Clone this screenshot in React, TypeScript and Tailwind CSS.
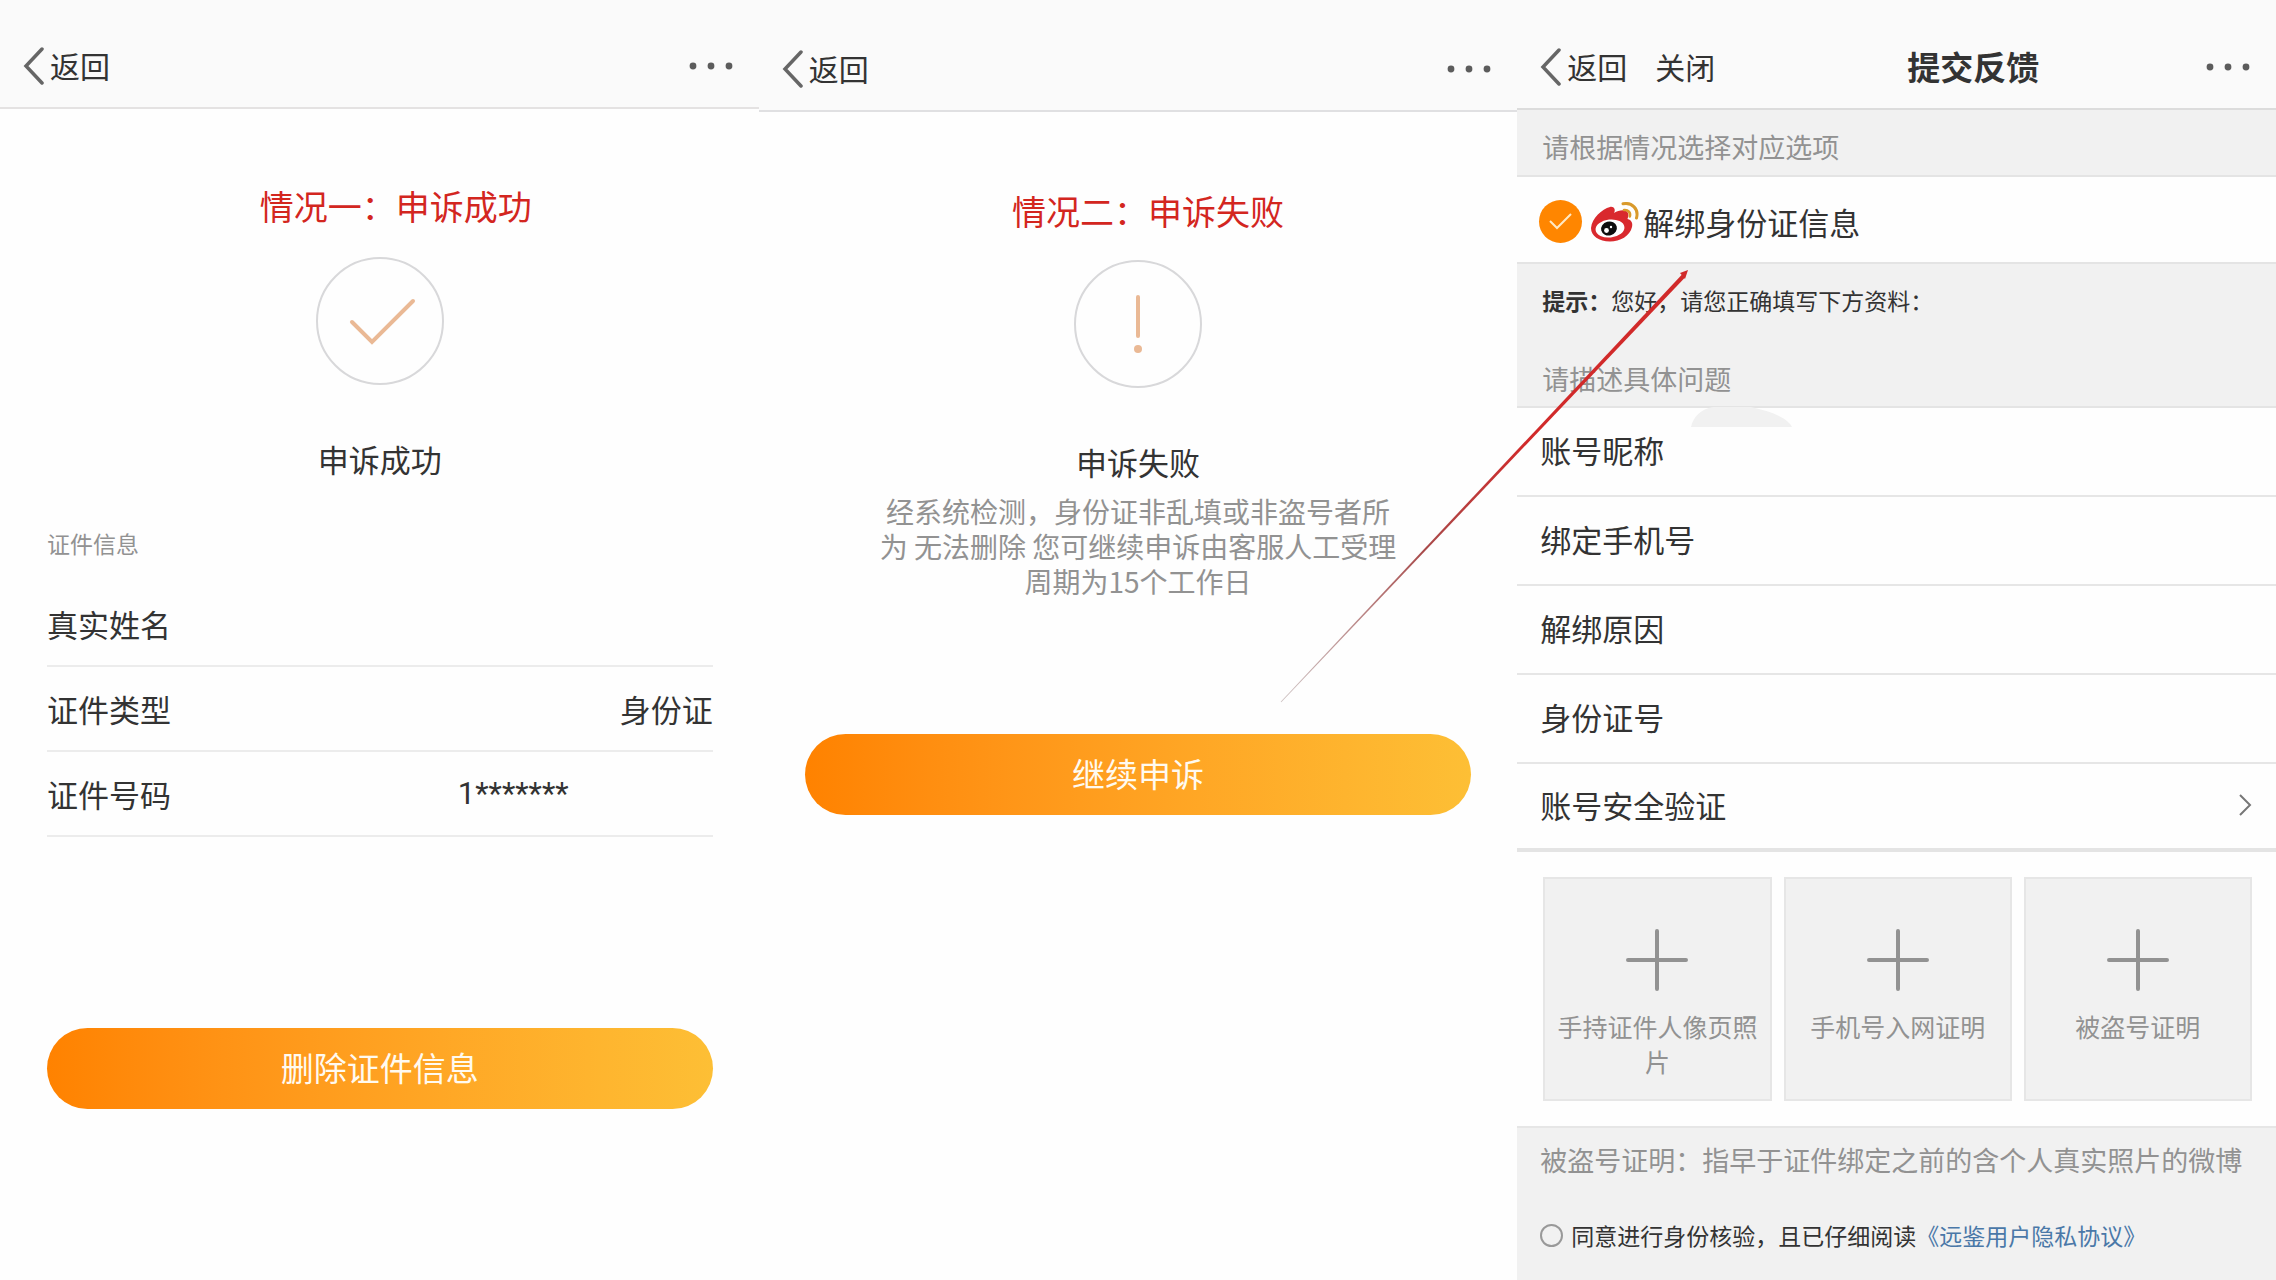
import type { ReactNode } from "react";

const idRows = [
  { label: "真实姓名", value: "", masked: false },
  { label: "证件类型", value: "身份证", masked: false },
  { label: "证件号码", value: "1*******", masked: true },
];

const fields = [
  { id: "nickname", label: "账号昵称" },
  { id: "phone", label: "绑定手机号" },
  { id: "reason", label: "解绑原因" },
  { id: "idNumber", label: "身份证号" },
];

const uploads = ["手持证件人像页照片", "手机号入网证明", "被盗号证明"];

const failureReason = `经系统检测，身份证非乱填或非盗号者所
为 无法删除 您可继续申诉由客服人工受理
周期为15个工作日`;

function BackButton() {
  return (
    <button className="flex items-center gap-1.5 text-[30px]">
      <svg width="21" height="38" viewBox="0 0 21 38" fill="none" aria-hidden="true">
        <path d="M19 2 L3 19 L19 36" stroke="#666" strokeWidth="3.5" strokeLinecap="round" />
      </svg>
      <span className="pb-0.5">返回</span>
    </button>
  );
}

function MoreButton() {
  return (
    <button className="ml-auto" aria-label="更多">
      <svg width="44" height="8" viewBox="0 0 44 8" fill="#5c5c5c" aria-hidden="true">
        <circle cx="4" cy="4" r="3.4" />
        <circle cx="22" cy="4" r="3.4" />
        <circle cx="40" cy="4" r="3.4" />
      </svg>
    </button>
  );
}

function StatusIcon({ children }: { children: ReactNode }) {
  return (
    <svg
      className="mx-auto"
      width="128"
      height="128"
      viewBox="0 0 128 128"
      fill="none"
      aria-hidden="true"
    >
      <circle cx="64" cy="64" r="63" stroke="#d8d8da" strokeWidth="2" />
      {children}
    </svg>
  );
}

function PrimaryButton({ children }: { children: ReactNode }) {
  return (
    <button className="h-[81px] w-full rounded-full bg-linear-to-r from-[#ff8200] to-[#fdbf35] pb-1 text-[33px] text-[#fffaf0]">
      {children}
    </button>
  );
}

function WeiboLogo() {
  return (
    <svg width="48" height="40" viewBox="0 0 48 40" fill="none" aria-hidden="true">
      <path
        d="M0 26 C1 16 11 7 19 5 C23 4 25 8 23 11 C28 8 35 7 37 11 C38 13 37 15 36.500 17 C40.500 18 42 21 41 25 C39 34 29 39.500 19 39.500 C8 39.500 0 34 0 26Z"
        fill="#d9292e"
      />
      <ellipse cx="19" cy="26.500" rx="14.500" ry="9" transform="rotate(-6 19 26.500)" fill="#fff" />
      <ellipse cx="18" cy="26.500" rx="8" ry="7" transform="rotate(-15 18 26.500)" fill="#0d0d0d" />
      <circle cx="15.500" cy="28.500" r="2.400" fill="#fff" />
      <circle cx="20" cy="25" r="1.200" fill="#fff" />
      <path
        d="M32 1.800 C41 0 48 7 45.500 16"
        stroke="#d99a2b"
        strokeWidth="3"
        strokeLinecap="round"
      />
      <path
        d="M33 8 C37 7.500 40 10.500 38.800 14.500"
        stroke="#d99a2b"
        strokeWidth="2.600"
        strokeLinecap="round"
      />
    </svg>
  );
}

function SuccessPanel() {
  return (
    <section>
      <header className="flex h-[109px] items-center border-b-2 border-[#e4e2e2] bg-[#fafafa] pt-6 pr-[26px] pl-[23px]">
        <BackButton />
        <MoreButton />
      </header>
      <div className="pr-[46px] pl-[47px]">
        <h2 className="mt-[73px] pl-8 text-center text-[34px] leading-12 text-[#d3261f]">
          情况一：申诉成功
        </h2>
        <div className="mt-[27px]">
          <StatusIcon>
            <path d="M36 65 L56 85 L97 44" stroke="#eab995" strokeWidth="4" strokeLinecap="round" />
          </StatusIcon>
        </div>
        <p className="mt-[50px] text-center leading-12">申诉成功</p>
        <h3 className="mt-[42px] text-[23px] leading-9 text-[#929292]">证件信息</h3>
        <dl className="mt-[21px]">
          {idRows.map((row) => (
            <div
              key={row.label}
              className="flex h-[85px] items-center justify-between border-b-2 border-[#ececec]"
            >
              <dt>{row.label}</dt>
              <dd className={row.masked ? "pr-36 font-[Roboto,sans-serif]" : ""}>{row.value}</dd>
            </div>
          ))}
        </dl>
        <div className="mt-[191px]">
          <PrimaryButton>删除证件信息</PrimaryButton>
        </div>
      </div>
    </section>
  );
}

function FailurePanel() {
  return (
    <section>
      <header className="flex h-28 items-center border-b-2 border-[#e0e0e2] bg-[#fafafa] pt-7 pr-[26px] pl-[23px]">
        <BackButton />
        <MoreButton />
      </header>
      <div className="px-[46px]">
        <h2 className="mt-[75px] pl-5 text-center text-[34px] leading-12 text-[#d3261f]">
          情况二：申诉失败
        </h2>
        <div className="mt-[25px]">
          <StatusIcon>
            <path d="M64 37 V76" stroke="#eab995" strokeWidth="4" strokeLinecap="round" />
            <circle cx="64" cy="89" r="4" fill="#eab995" />
          </StatusIcon>
        </div>
        <p className="mt-[50px] text-center leading-12">申诉失败</p>
        <p className="mt-2 text-center text-[28px] leading-[35px] whitespace-pre-line text-[#929292]">
          {failureReason}
        </p>
        <div className="mt-[135px]">
          <PrimaryButton>继续申诉</PrimaryButton>
        </div>
      </div>
    </section>
  );
}

// Annotation that runs from the failure panel up to the selected option
function Arrow() {
  return (
    <svg
      className="pointer-events-none absolute top-[269px] -left-[237px]"
      width="410"
      height="434"
      viewBox="0 0 410 434"
      aria-hidden="true"
    >
      <defs>
        <linearGradient id="arrowFade" x1="0" y1="434" x2="410" y2="0" gradientUnits="userSpaceOnUse">
          <stop offset="0" stopColor="#b8a8a8" stopOpacity="0.7" />
          <stop offset="0.35" stopColor="#a84a4a" />
          <stop offset="0.6" stopColor="#d12a2a" />
          <stop offset="1" stopColor="#d12a2a" />
        </linearGradient>
      </defs>
      <path d="M0.700 432.700 L402 5.500 L405 8.500 L1.300 433.300 Z" fill="url(#arrowFade)" />
      <path d="M408 1 L400 4 L405 10 Z" fill="#d12a2a" />
    </svg>
  );
}

function FeedbackPanel() {
  return (
    <section className="relative flex flex-col">
      <header className="flex h-[110px] items-center border-b-2 border-[#dcdcdc] bg-[#fafafa] pt-[26px] pr-[26px] pl-[23px]">
        <BackButton />
        <button className="ml-7 pb-0.5 text-[30px]">关闭</button>
        <h1 className="ml-48 pb-0.5 text-[33px] font-bold">提交反馈</h1>
        <MoreButton />
      </header>

      <form className="flex flex-1 flex-col">
        <p className="flex h-[67px] items-center border-b-2 border-[#e4e4e4] bg-[#f1f1f1] px-[25px] pt-2 text-[27px] text-[#929292]">
          请根据情况选择对应选项
        </p>
        <label className="flex h-[85px] items-center px-[22px] pt-1">
          <span className="relative size-[43px]">
            <input
              type="checkbox"
              defaultChecked
              className="block size-[43px] appearance-none rounded-full bg-[#ff8600]"
            />
            <svg
              className="pointer-events-none absolute inset-0"
              width="43"
              height="43"
              viewBox="0 0 43 43"
              fill="none"
              aria-hidden="true"
            >
              <path d="M11 21 L18 28 L32 14" stroke="#ffe9c4" strokeWidth="2" />
            </svg>
          </span>
          <span className="mr-1 ml-[9px]">
            <WeiboLogo />
          </span>
          解绑身份证信息
        </label>

        <div className="h-[146px] border-y-2 border-[#e4e4e4] bg-[#f1f1f1] px-[25px] pt-4">
          <p className="text-[23px] leading-10">
            <strong>提示：</strong>您好，请您正确填写下方资料：
          </p>
          <p className="mt-[39px] text-[27px] leading-10 text-[#929292]">请描述具体问题</p>
        </div>

        {fields.map((field) => (
          <div
            key={field.id}
            className="flex h-[89px] items-center border-b-2 border-[#e6e6e6] pb-1 pl-[23px]"
          >
            <label htmlFor={field.id}>{field.label}</label>
            <input id={field.id} type="text" className="ml-6 h-full min-w-0 flex-1 outline-none" />
          </div>
        ))}
        <button
          type="button"
          className="flex h-[88px] items-center justify-between border-b-4 border-[#e4e4e4] pr-6 pb-0.5 pl-[23px]"
        >
          账号安全验证
          <svg width="13" height="22" viewBox="0 0 13 22" fill="none" aria-hidden="true">
            <path d="M1 1 L11 11 L1 21" stroke="#777" strokeWidth="2" />
          </svg>
        </button>

        <div className="grid grid-cols-3 gap-3 pt-[25px] pr-6 pb-[25px] pl-[26px]">
          {uploads.map((name) => (
            <button
              key={name}
              type="button"
              className="flex h-56 flex-col items-center border-2 border-[#e6e6e6] bg-[#f1f1f1] px-2 pt-[50px] text-[25px] leading-[35px] text-[#929292]"
            >
              <svg width="62" height="62" viewBox="0 0 62 62" fill="none" aria-hidden="true">
                <path d="M31 2 V60 M2 31 H60" stroke="#929292" strokeWidth="4" strokeLinecap="round" />
              </svg>
              <span className="mt-[18px]">{name}</span>
            </button>
          ))}
        </div>

        <footer className="flex-1 border-t-2 border-[#e6e6e6] bg-[#f1f1f1] px-[23px] pt-3">
          <p className="text-[27px] leading-10 whitespace-nowrap text-[#929292]">
            被盗号证明：指早于证件绑定之前的含个人真实照片的微博
          </p>
          <div className="mt-[35px] flex items-center text-[23px] leading-10">
            <input
              id="agree"
              type="checkbox"
              className="size-[23px] appearance-none rounded-full border-2 border-[#999]"
            />
            <label htmlFor="agree" className="ml-2">
              同意进行身份核验，且已仔细阅读
            </label>
            <a href="#privacy" className="text-[#4a78a8]">
              《远鉴用户隐私协议》
            </a>
          </div>
        </footer>
      </form>

      <svg
        className="pointer-events-none absolute top-[407px] left-[172px]"
        width="104"
        height="20"
        viewBox="0 0 104 20"
        aria-hidden="true"
      >
        <path d="M2 20 C4 10 12 2 24 0 H62 C80 4 98 10 103 20 Z" fill="#f1f1f1" />
      </svg>
      <Arrow />
    </section>
  );
}

export default function App() {
  return (
    <main className="grid min-h-screen grid-cols-3 bg-[#fefefe] font-['Noto_Sans_CJK_SC',sans-serif] text-[31px] leading-[46px] text-[#333]">
      <SuccessPanel />
      <FailurePanel />
      <FeedbackPanel />
    </main>
  );
}
